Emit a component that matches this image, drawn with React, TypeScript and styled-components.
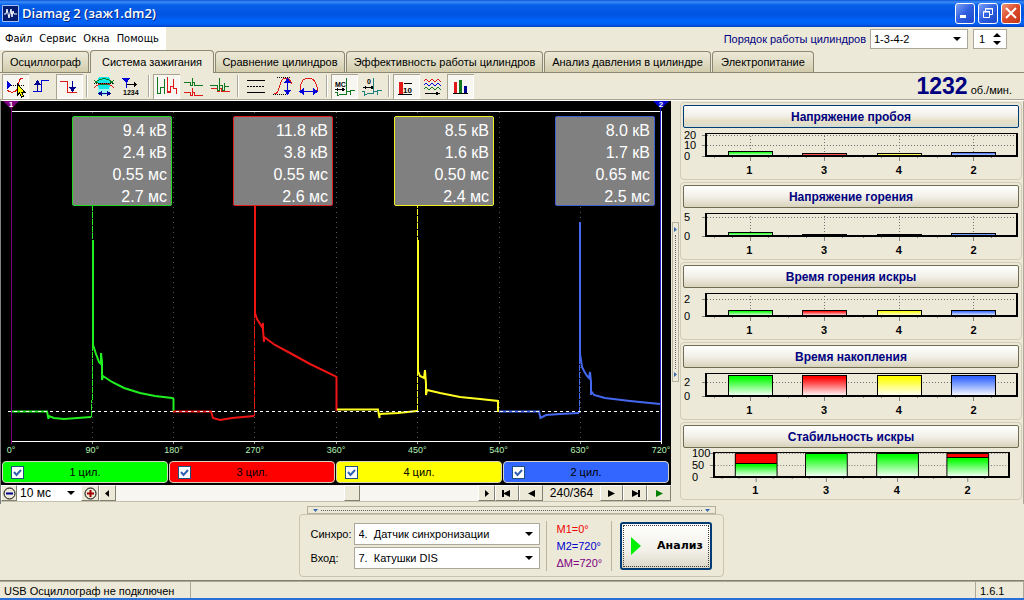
import React from "react";
import styled, { createGlobalStyle, css } from "styled-components";

const UI = '"Liberation Sans", Arial, sans-serif';
const TAHOMA = '"DejaVu Sans Condensed", Tahoma, sans-serif';

const GlobalStyle = createGlobalStyle`
  * { box-sizing: border-box; }
  body { margin: 0; background: #ece9d8; font: 11px/16px ${UI}; color: #000; }
  button, input, select { font: inherit; color: inherit; margin: 0; }
  button { padding: 0; }
`;

const Window = styled.div`
  display: flex;
  flex-direction: column;
  min-height: 100vh;
  border-bottom: 2px solid #2a6fd8;
`;

/* Title bar */
const TitleBar = styled.header`
  display: flex;
  align-items: center;
  gap: 3px;
  height: 27px;
  padding: 0 3px 1px 2px;
  background: linear-gradient(#0a55d8 0, #3c8cf8 2px, #0560ea 5px, #0054e0 14px, #0062fa 21px, #0060f4 24px, #0040c0 27px);
`;
const WindowTitle = styled.h1`
  flex: 1;
  margin: 0;
  font: 600 13px/20px "Open Sans", sans-serif;
  color: #fff;
  text-shadow: 1px 1px 0 #0a2a80;
`;
const CaptionButton = styled.button<{ $close?: boolean }>`
  display: grid;
  place-items: center;
  width: 20px;
  height: 21px;
  border: 1px solid #fff;
  border-radius: 3px;
  background: ${(p) => (p.$close ? "linear-gradient(135deg, #f0987c, #dc4a28 50%, #c03818)" : "linear-gradient(135deg, #7ca0f4, #2e5ee0 50%, #1c48c8)")};
`;

/* Menu row */
const MenuRow = styled.div`
  display: flex;
  justify-content: space-between;
  height: 23px;
`;
const Menu = styled.nav`
  display: flex;
  align-items: center;
  gap: 7px;
  padding: 0 7px 0 5px;
  background: #fff;
  font: 11px/14px ${TAHOMA};
`;
const MenuLink = styled.a`
  color: #000;
  text-decoration: none;
`;
const OrderBox = styled.div`
  display: flex;
  align-items: center;
  gap: 4px;
  padding-right: 17px;
`;
const OrderLabel = styled.label`
  color: #000080;
`;

const SelectBox = styled.span<{ $w: number; $h: number; $flat?: boolean }>`
  position: relative;
  display: block;
  width: ${(p) => p.$w}px;
  height: ${(p) => p.$h}px;
  border: ${(p) => (p.$flat ? "0" : "1px solid #aca899")};
  background: #fff;
  &::after {
    content: "";
    position: absolute;
    right: 6px;
    top: 50%;
    margin-top: -2px;
    border: 4px solid transparent;
    border-top-color: #000;
    border-bottom: 0;
    pointer-events: none;
  }
`;
const SelectInput = styled.select<{ $pad?: number }>`
  appearance: none;
  display: block;
  width: 100%;
  height: 100%;
  padding: 0 16px 0 ${(p) => p.$pad ?? 3}px;
  border: 0;
  outline: 0;
  background: transparent;
  white-space: pre;
`;
const Spinner = styled.div`
  display: flex;
  width: 34px;
  height: 20px;
  margin-left: 1px;
  border: 1px solid #aca899;
  background: #fff;
`;
const SpinnerInput = styled.input`
  flex: 1;
  min-width: 0;
  padding: 0 0 0 5px;
  border: 0;
  outline: 0;
  background: transparent;
  appearance: textfield;
  &::-webkit-inner-spin-button { display: none; }
`;
const SpinnerButtons = styled.div`
  display: grid;
  width: 18px;
`;
const BareButton = styled.button`
  display: grid;
  place-items: center;
  border: 0;
  background: none;
`;

/* Tabs */
const Tabs = styled.div`
  display: flex;
  align-items: flex-end;
  gap: 1px;
  height: 23px;
  padding-left: 2px;
  border-bottom: 1px solid #8c8874;
`;
const Tab = styled.button<{ $w: number; $active?: boolean }>`
  width: ${(p) => p.$w}px;
  height: ${(p) => (p.$active ? 23 : 21)}px;
  margin-bottom: ${(p) => (p.$active ? -1 : 0)}px;
  padding: 0;
  border: 1px solid #8c8874;
  border-bottom: 0;
  border-radius: 4px 4px 0 0;
  background: ${(p) => (p.$active ? "#ece9d8" : "linear-gradient(#ece9d8, #e0dcc4 50%, #d2ccac)")};
  white-space: nowrap;
`;

/* Toolbar */
const Toolbar = styled.div`
  display: flex;
  align-items: center;
  height: 27px;
  padding-left: 2px;
  padding-right: 12px;
  border-bottom: 1px solid #a8a490;
`;
const ToolButton = styled.button<{ $down?: boolean }>`
  width: 27px;
  height: 25px;
  border: 0;
  background: none;
  ${(p) =>
    p.$down &&
    css`
      background: #f8f6f0;
      box-shadow: inset 1px 1px 0 #a8a490, inset -1px -1px 0 #fff;
    `}
  svg { display: block; }
`;
const ToolSeparator = styled.span`
  width: 2px;
  height: 22px;
  margin: 0 3px;
  border-left: 1px solid #aca899;
  border-right: 1px solid #fff;
`;
const Rpm = styled.output`
  display: flex;
  align-items: baseline;
  gap: 3px;
  margin-left: auto;
`;
const RpmValue = styled.strong`
  font-size: 23px;
  line-height: 24px;
  color: #000080;
`;
const RpmUnit = styled.span`
  font-size: 11px;
`;

/* Work area */
const Work = styled.main`
  display: grid;
  grid-template-columns: minmax(0, 1fr) 9px 344px;
  flex: 1;
  border-left: 1px solid #808080;
  border-top: 1px solid #fff;
`;
const ScopePane = styled.section`
  display: flex;
  flex-direction: column;
  padding-bottom: 2px;
`;
const Scope = styled.div`
  display: flex;
  flex-direction: column;
  flex: 1;
  position: relative;
  background: #000;
`;
const PlotHolder = styled.div`
  display: flex;
  flex: 1;
  min-height: 300px;
`;
const Plot = styled.svg`
  display: block;
  flex: 1;
  width: 100%;
  min-height: 0;
`;
const AngleAxis = styled.div`
  display: flex;
  justify-content: space-between;
  height: 14px;
  padding: 0 10px;
  font-size: 9px;
  line-height: 10px;
  color: #b4f0b4;
`;
const AngleTick = styled.span`
  display: flex;
  justify-content: center;
  width: 0;
`;
const Readouts = styled.div`
  position: absolute;
  top: 15px;
  left: 71px;
  right: 16px;
  display: flex;
  justify-content: space-between;
`;
const Readout = styled.div<{ $color: string }>`
  width: 100px;
  height: 90px;
  padding: 3px 4px;
  border: 1px solid ${(p) => p.$color};
  border-radius: 2px;
  background: #808080;
  color: #fff;
  font-size: 16px;
  line-height: 22px;
  text-align: right;
`;
const Marker = styled.span<{ $right?: boolean }>`
  position: absolute;
  top: 0;
  ${(p) => (p.$right ? "right: 2px;" : "left: 2px;")}
  width: 16px;
  height: 8px;
  background: ${(p) => (p.$right ? "#0000d0" : "#800080")};
  clip-path: polygon(0 0, 100% 0, 50% 100%);
  color: #fff;
  font: bold 8px/8px ${UI};
  text-align: center;
`;
const Channels = styled.div`
  display: grid;
  grid-template-columns: repeat(4, 1fr);
  gap: 1px;
  padding: 2px 2px 2px 1px;
  background: #000;
`;
const Channel = styled.label<{ $color: string }>`
  display: grid;
  grid-template-columns: 13px 1fr 13px;
  align-items: center;
  height: 22px;
  padding: 0 8px;
  border: 1px solid #d8d4c0;
  border-radius: 4px;
  background: ${(p) => p.$color};
  text-align: center;
`;
const CheckBox = styled.input`
  appearance: none;
  width: 13px;
  height: 13px;
  border: 1px solid #1c5180;
  background: #fff;
  &:checked {
    background: #fff url("data:image/svg+xml,%3Csvg xmlns='http://www.w3.org/2000/svg' viewBox='0 0 11 11'%3E%3Cpath d='M2 5l2.5 3L9 3' fill='none' stroke='%233060b0' stroke-width='2'/%3E%3C/svg%3E");
  }
`;
const NavBar = styled.div`
  display: flex;
  align-items: stretch;
  height: 17px;
  border-bottom: 1px solid #c4c0ac;
  font-size: 12px;
`;
const NavButton = styled.button<{ $w: number }>`
  display: grid;
  place-items: center;
  width: ${(p) => p.$w}px;
  border: 1px solid;
  border-color: #fff #808070 #808070 #fff;
  background: #ece9d8;
`;
const ScrollRange = styled.input`
  appearance: none;
  flex: 1;
  min-width: 0;
  height: 16px;
  background: #f8f6f0;
  &::-webkit-slider-thumb {
    appearance: none;
    width: 16px;
    height: 16px;
    border: 1px solid;
    border-color: #fff #808070 #808070 #fff;
    background: #ece9d8;
  }
`;
const FrameCounter = styled.span`
  width: 57px;
  text-align: center;
`;
const SideSplitter = styled.button`
  display: flex;
  flex-direction: column;
  justify-content: space-between;
  align-items: center;
  align-self: center;
  justify-self: center;
  width: 7px;
  height: 160px;
  margin-bottom: 2px;
  padding: 4px 0;
  border: 1px solid #b4b09c;
  background: #ece9d8;
`;
const SplitterDots = styled.span<{ $vertical?: boolean }>`
  flex: 1;
  margin: 3px;
  ${(p) => (p.$vertical ? "border-left" : "border-top")}: 1px dotted #606060;
`;

/* Cylinder summary */
const Summary = styled.aside`
  display: flex;
  flex-direction: column;
  gap: 2px;
  padding: 1px 1px 3px 0;
  border-right: 1px solid #aca899;
`;
const SummaryGroup = styled.section`
  height: 78px;
  padding: 2px;
  border: 1px solid #d0ccb8;
  border-radius: 4px;
`;
const SummaryButton = styled.button<{ $focus?: boolean }>`
  display: block;
  width: 100%;
  height: 23px;
  border: 1px solid ${(p) => (p.$focus ? "#003c74" : "#706c50")};
  border-radius: 2px;
  background: ${(p) => (p.$focus ? "linear-gradient(#fff, #f0eee4 50%, #e8dfc4 70%, #d4dcd4)" : "linear-gradient(#fff, #f2f0e8 50%, #d8d3bc)")};
  color: #000080;
  font-size: 12px;
  font-weight: bold;
`;
const BarRow = styled.div<{ $inset?: boolean }>`
  display: grid;
  grid-template-columns: 22px minmax(0, 1fr);
  padding: ${(p) => (p.$inset ? "0 9px 0 8px" : "0 1px 0 0")};
`;
const BarSvg = styled.svg`
  display: block;
  width: 100%;
  height: 34px;
`;
const CylinderNames = styled.div`
  display: grid;
  grid-template-columns: repeat(4, 1fr);
  grid-column: 2;
  padding: 0 7px;
  font-weight: bold;
  text-align: center;
`;

/* Input panel */
const Lower = styled.footer`
  display: flex;
  flex-direction: column;
  align-items: center;
  padding: 2px 2px 3px 0;
  border-bottom: 1px solid #808070;
`;
const BottomSplitter = styled.button`
  display: flex;
  align-items: center;
  justify-content: space-between;
  width: 409px;
  height: 8px;
  padding: 0 5px;
  border: 1px solid #b4b09c;
  background: #ece9d8;
`;
const InputPanel = styled.div`
  display: flex;
  align-items: center;
  width: 425px;
  height: 63px;
  padding: 0 11px;
  border: 1px solid #c8c4b0;
  border-radius: 4px;
`;
const SourceForm = styled.div`
  display: grid;
  grid-template-columns: 43px 186px;
  align-items: center;
  row-gap: 2px;
  margin-right: 6px;
`;
const Cursors = styled.div`
  width: 67px;
  height: 50px;
  padding-left: 10px;
  border-left: 1px solid #b8b4a0;
  border-right: 1px solid #b8b4a0;
`;
const CursorText = styled.div<{ $color: string }>`
  line-height: 17px;
  color: ${(p) => p.$color};
`;
const AnalyzeButton = styled.button`
  display: flex;
  align-items: center;
  gap: 15px;
  width: 92px;
  height: 48px;
  margin-left: 8px;
  padding-left: 8px;
  border: 2px solid #003c74;
  border-radius: 3px;
  outline: 1px dotted #404040;
  outline-offset: -4px;
  background: linear-gradient(#fff, #f2f0e8 60%, #dcd8c8);
  font: bold 11px/14px "DejaVu Sans", sans-serif;
`;
const StatusBar = styled.div`
  display: flex;
  height: 17px;
  border-top: 1px solid #aca899;
  line-height: 18px;
  white-space: nowrap;
`;
const StatusCell = styled.span<{ $w?: number }>`
  ${(p) => (p.$w ? `width: ${p.$w}px;` : "flex: 1;")}
  padding-left: 4px;
  border-right: 1px solid #aca899;
`;

/* Toolbar drawings, on a 27 by 25 grid */
const Ic = ({ children }: { children: React.ReactNode }) => (
  <svg width="27" height="25" viewBox="0 0 27 25" fill="none" shapeRendering="crispEdges" aria-hidden="true">
    {children}
  </svg>
);
const G = "#107820";
const R = "#e01818";
const B = "#0000d8";
const pulse = (x: number, y: number) => `M${x} ${y}h7v3h2v-8v5h2v3h8`;

const icons: Record<string, React.ReactNode> = {
  trigger: (
    <Ic>
      <path d="M5 7l5 4-5 4z" fill={B} />
      <path d="M9 11.500h13" stroke="#000" strokeDasharray="1 1" />
      <path d="M21 4C16 4 17 11 15 15C13 19 8 19 5 16" stroke={R} />
      <path d="M15.500 10v11l2-2 2 4 2-1-2-4h3z" fill="#ff0" stroke="#000" />
    </Ic>
  ),
  rise: (
    <Ic>
      <path d="M4 17.500H12.500V6.500H20" stroke={B} />
      <path d="M8.500 17V8" stroke="#000090" />
      <path d="M8.500 6l3.500 5h-7z" fill="#000090" />
    </Ic>
  ),
  fall: (
    <Ic>
      <path d="M4 7.500H11.500V18.500H21" stroke={R} />
      <path d="M16.500 7v7" stroke="#000090" />
      <path d="M16.500 18l-3.500-5h7z" fill="#000090" />
    </Ic>
  ),
  window: (
    <Ic>
      <path d="M7 7h12v14H7z" fill="#a0f4f4" />
      <path d="M8 3h10l2 4-2 8h-10l-2-8z" fill="#10e8e8" />
      <path d="M3 6c5 6 15 6 20 0M3 10c6-7 14-7 20 0" stroke={G} />
      <path d="M3 14c5-6 15-6 20 0" stroke={R} />
      <path d="M3 9.500h20" stroke="#000" strokeDasharray="1 1" />
      <path d="M9 19.500h9" stroke="#000090" />
      <path d="M7 19.500l4-3v6zM20 19.500l-4-3v6z" fill="#000090" />
    </Ic>
  ),
  count: (
    <Ic>
      <path d="M4 4h8L8.500 8z" fill={B} stroke={B} />
      <path d="M8.500 8v6" stroke={B} />
      <path d="M9 10.500h9" stroke="#000" />
      <path d="M19 10.500l-3-3v6z" fill="#000" />
      <text x="5" y="21" fontSize="7" fontWeight="bold" fontFamily={UI} fill="#000">1234</text>
    </Ic>
  ),
  parade: (
    <Ic>
      <path d="M4.500 3v16.500h3v-6h4v-9v15" stroke={G} />
      <path d="M14.500 12.500v5h2.500M14.500 3v15.500h3v-6h3v-8v10h3v5" stroke={R} />
    </Ic>
  ),
  split: (
    <Ic>
      <path d={pulse(3.5, 8.5)} stroke={G} />
      <path d={pulse(3.5, 18.5)} stroke={R} />
    </Ic>
  ),
  overlay: (
    <Ic>
      <path d={pulse(3.5, 14.5)} stroke={R} />
      <path d="M3 11.500h7v5h2v-13v8h3v5h2v-8v4h5" stroke={G} />
    </Ic>
  ),
  levels: (
    <Ic>
      <path d="M5 6.500h18M5 18.500h18" stroke="#000" />
      <path d="M5 12.500h18" stroke="#000" strokeDasharray="2 1" />
    </Ic>
  ),
  vertical: (
    <Ic>
      <path d="M4 20C13 21 8 4 17 4C20 4 21 6 23 10" stroke={R} />
      <path d="M8 3.500h14M4 20.500h14" stroke="#000" strokeDasharray="1 1" />
      <path d="M18.500 7v11" stroke={B} />
      <path d="M18.500 4l3.500 5h-7zM18.500 21l3.500-5h-7z" fill={B} />
    </Ic>
  ),
  horizontal: (
    <Ic>
      <path d="M4 18V13C5 8 8 4 12 4C17 4 20 8 21 13V18" stroke={R} />
      <path d="M7 17.500h12" stroke={B} />
      <path d="M3 17.500l5-3.500v7zM22 17.500l-5-3.500v7z" fill={B} />
    </Ic>
  ),
  time: (
    <Ic>
      <text x="4" y="13" fontSize="7" fontWeight="bold" fontFamily={UI} fill="#000">МС</text>
      <path d="M6 15.500h7" stroke="#000" />
      <path d="M4 15.500l3-2v4zM14 15.500l-3-2v4z" fill="#000" />
      <path d="M4 18.500h2v3l4-1h5.500V4v13h4v4v-5h4" stroke={G} />
    </Ic>
  ),
  angle: (
    <Ic>
      <text x="9" y="10" fontSize="7" fontWeight="bold" fontFamily={UI} fill="#000">0</text>
      <path d="M7 13.500h8" stroke="#000" />
      <path d="M5 13.500l3-2v4zM16 13.500l-3-2v4z" fill="#000" />
      <path d="M4 17.500h2v4l4-2h5.500V4v13h4v4v-5h4" stroke="#208080" />
    </Ic>
  ),
  average: (
    <Ic>
      <path d="M6 8h4v12H6z" fill={R} />
      <path d="M5 20.500h14M11 9.500h8" stroke="#000" />
      <text x="10" y="19" fontSize="8" fontWeight="bold" fontFamily={UI} fill="#000">10</text>
    </Ic>
  ),
  waves: (
    <Ic>
      <path d="M4 7l2-2 3 3 3-3 3 3 3-3 3 3" stroke={R} />
      <path d="M4 11l2-2 3 3 3-3 3 3 3-3 3 3" stroke={B} />
      <path d="M4 15l2-2 3 3 3-3 3 3 3-3 3 3" stroke={G} />
      <path d="M5 19.500h14" stroke="#000" />
      <path d="M20 19.500l-4-2v4z" fill="#000" />
    </Ic>
  ),
  bars: (
    <Ic>
      <path d="M7 8h3v11H7z" fill={R} />
      <path d="M12 6h3v13h-3z" fill={G} />
      <path d="M17 12h3v7h-3z" fill="#000090" />
      <path d="M6 19.500h15" stroke="#000" />
    </Ic>
  ),
};

const toolGroups: [string, string, boolean][][] = [
  [["trigger", "Синхронизация", true], ["rise", "Фронт", false], ["fall", "Спад", true]],
  [["window", "Окно", false], ["count", "Нумерация", false]],
  [["parade", "Парад", true], ["split", "Раздельно", false], ["overlay", "Наложение", false]],
  [["levels", "Уровни", false], ["vertical", "По вертикали", false], ["horizontal", "По горизонтали", false]],
  [["time", "Время", true], ["angle", "Угол", false]],
  [["average", "Усреднение", true], ["waves", "Кривые", false], ["bars", "Диаграммы", true]],
];

const tabs: [string, number][] = [
  ["Осциллограф", 87],
  ["Система зажигания", 124],
  ["Сравнение цилиндров", 130],
  ["Эффективность работы цилиндров", 197],
  ["Анализ давления в цилиндре", 167],
  ["Электропитание", 102],
];

const cylinders = [
  { name: "1", color: "#00ff00", edge: "#20d820", values: ["9.4 кВ", "2.4 кВ", "0.55 мс", "2.7 мс"] },
  { name: "3", color: "#ff0000", edge: "#e02020", values: ["11.8 кВ", "3.8 кВ", "0.55 мс", "2.6 мс"] },
  { name: "4", color: "#ffff00", edge: "#f0f020", values: ["8.5 кВ", "1.6 кВ", "0.50 мс", "2.4 мс"] },
  { name: "2", color: "#3366ff", edge: "#4060d0", values: ["8.0 кВ", "1.7 кВ", "0.65 мс", "2.5 мс"] },
];

const traces = [
  {
    color: "#20f020",
    spike: "M91.500 417V400M92.500 400V206",
    burn: "M93 240V347",
    line: "M12 411.500H47L48.500 419V416L54 418L64 419L91 417M93 345L96 354L99 362L101 364V353L102 362V380L103 376L112 382L124 388L140 393L155 396L172 398L173.500 399V412",
  },
  {
    color: "#f01414",
    spike: "M254.500 416V206",
    burn: "M255 206V315",
    line: "M173 411.500H211L213 418L220 420L232 418L254 416M255 313L257 319L262 327L263 323V330L264 342V337L275 345L290 353L310 364L335 376L336.500 377V411",
  },
  {
    color: "#ffff20",
    spike: "M417.500 411V206",
    burn: "M418 240V373",
    line: "M337 409.500H378L379.500 418V414L398 413L417 411M418 371L420 376L424 378L425 370L426 384V395L427 390L440 393L460 397L480 399L498 401V412",
  },
  {
    color: "#4468f0",
    spike: "M579.500 413V222",
    burn: "M580 222V358",
    line: "M499 411.500H539L540.500 418L546 415L560 414L579 413M580 354L582 367L584 371L587 376L589 378L590 372L591 382V395V391L594 395L605 398L630 401L660 404",
  },
];

const gridX = [92.5, 173.5, 254.5, 336.5, 417.5, 499.5, 580.5];

interface Chart {
  title: string;
  ticks: [string, number][];
  tops: number[];
  red?: boolean;
}
const charts: Chart[] = [
  { title: "Напряжение пробоя", ticks: [["20", 7], ["10", 17], ["0", 28]], tops: [23, 25, 25, 24] },
  { title: "Напряжение горения", ticks: [["5", 9], ["0", 28]], tops: [24, 26, 26, 25] },
  { title: "Время горения искры", ticks: [["2", 11], ["0", 28]], tops: [22, 22, 22, 22] },
  { title: "Время накопления", ticks: [["2", 14], ["0", 28]], tops: [7, 7, 7, 7] },
  { title: "Стабильность искры", ticks: [["100", 5], ["50", 17], ["0", 29]], tops: [15, 5, 5, 9], red: true },
];

function BarPanel({ chart, index }: { chart: Chart; index: number }) {
  const stacked = !!chart.red;
  const top = stacked ? 4 : 5;
  const floor = stacked ? 29 : 28;
  return (
    <SummaryGroup>
      <SummaryButton $focus={index === 0}>{chart.title}</SummaryButton>
      <BarRow $inset={stacked}>
        <svg width="22" height="34" viewBox="0 0 22 34">
          {chart.ticks.map(([t, y]) => (
            <React.Fragment key={t}>
              <text x="1" y={y + 4} fontSize="11" fontFamily={UI}>{t}</text>
              <path d={`M19 ${y}.500h3`} stroke="#808080" />
            </React.Fragment>
          ))}
        </svg>
        <BarSvg viewBox="0 0 313 34" preserveAspectRatio="none" shapeRendering="crispEdges">
          <defs>
            {cylinders.map((c, i) => (
              <linearGradient key={c.name} id={`g${index}-${i}`} x2="0" y2="1">
                <stop offset="0.1" stopColor={stacked ? "#00ff00" : c.color} />
                <stop offset="1" stopColor="#fff" />
              </linearGradient>
            ))}
          </defs>
          {chart.ticks.slice(0, -1).map(([t, y]) => (
            <path key={t} d={`M2 ${y}.500H311`} stroke="#707070" strokeDasharray="1 2" />
          ))}
          {cylinders.map((c, i) => {
            const cx = 45 + Math.round(i * 74.4);
            return (
              <g key={c.name}>
                <path d={`M${cx}.500 ${top}V${floor}`} stroke="#707070" strokeDasharray="1 2" />
                <path d={`M${cx}.500 ${floor}v5M${cx - 36}.500 ${floor}v2M${cx - 18}.500 ${floor}v2M${cx + 18}.500 ${floor}v2`} stroke="#808080" />
                {stacked && <path d={`M${cx - 22}.500 5.500h44v${chart.tops[i] - 5}h-44z`} fill="#f00" stroke={chart.tops[i] > 5 ? "#000" : "#a06000"} />}
                <path d={`M${cx - 22}.500 ${chart.tops[i]}.500h44V${floor}h-44z`} fill={`url(#g${index}-${i})`} stroke="#000" />
              </g>
            );
          })}
          <path d={`M1 ${floor}V${top}.500M312 ${floor}V${top}M0 ${floor}H313`} stroke="#000" strokeWidth="2" />
          <path d={`M0 ${top}.500H313`} stroke="#000" />
        </BarSvg>
        <CylinderNames>
          {cylinders.map((c) => <span key={c.name}>{c.name}</span>)}
        </CylinderNames>
      </BarRow>
    </SummaryGroup>
  );
}

const Glyph = ({ d, color = "#000" }: { d: string; color?: string }) => (
  <svg width="13" height="9" viewBox="0 0 13 9" fill={color} aria-hidden="true"><path d={d} /></svg>
);

const ZoomGlyph = ({ plus }: { plus?: boolean }) => (
  <svg width="13" height="13" viewBox="0 0 13 13" fill="none" aria-hidden="true">
    <circle cx="6.500" cy="6.500" r="5.500" stroke="#000" />
    <path d={plus ? "M3 6.500h7M6.500 3v7" : "M3 6.500h7"} stroke={plus ? "#a00000" : "#000090"} strokeWidth="2" />
  </svg>
);

const Arrow = ({ d }: { d: string }) => (
  <svg width="5" height="5" viewBox="0 0 5 5" fill="#3868a8" aria-hidden="true"><path d={d} /></svg>
);

export default function App() {
  return (
    <Window>
      <GlobalStyle />
      <TitleBar>
        <svg width="17" height="17" viewBox="0 0 17 17" fill="none" aria-hidden="true">
          <path d="M.5.5h16v16H.5z" fill="#001c70" stroke="#a8c0f0" />
          <path d="M2 9h2l1-5 2 9 2-9 1 8 1-6 1 3h3" stroke="#fff" />
        </svg>
        <WindowTitle>Diamag 2 (заж1.dm2)</WindowTitle>
        <CaptionButton aria-label="Свернуть">
          <svg width="14" height="14" viewBox="0 0 14 14"><path d="M2 9h6v3H2z" fill="#fff" /></svg>
        </CaptionButton>
        <CaptionButton aria-label="Восстановить">
          <svg width="14" height="14" viewBox="0 0 14 14" fill="none" stroke="#fff"><path d="M4.500 5V2.500h7v6H9M4 3h8M2.500 5.500h6v6h-6zM2 6h7" /></svg>
        </CaptionButton>
        <CaptionButton $close aria-label="Закрыть">
          <svg width="14" height="14" viewBox="0 0 14 14"><path d="M2 2l10 10M12 2L2 12" stroke="#fff" strokeWidth="2" /></svg>
        </CaptionButton>
      </TitleBar>

      <MenuRow>
        <Menu>
          {["Файл", "Сервис", "Окна", "Помощь"].map((m) => <MenuLink key={m} href="#">{m}</MenuLink>)}
        </Menu>
        <OrderBox>
          <OrderLabel htmlFor="order">Порядок работы цилиндров</OrderLabel>
          <SelectBox $w={98} $h={20}>
            <SelectInput id="order"><option>1-3-4-2</option></SelectInput>
          </SelectBox>
          <Spinner>
            <SpinnerInput type="number" defaultValue={1} aria-label="Номер" />
            <SpinnerButtons>
              <BareButton aria-label="Больше"><Glyph d="M2 7l4-4 4 4z" /></BareButton>
              <BareButton aria-label="Меньше"><Glyph d="M2 2l4 4 4-4z" /></BareButton>
            </SpinnerButtons>
          </Spinner>
        </OrderBox>
      </MenuRow>

      <Tabs role="tablist">
        {tabs.map(([t, w], i) => (
          <Tab key={t} role="tab" aria-selected={i === 1} $w={w} $active={i === 1}>{t}</Tab>
        ))}
      </Tabs>

      <Toolbar>
        {toolGroups.map((group, i) => (
          <React.Fragment key={i}>
            {i > 0 && <ToolSeparator />}
            {group.map(([id, label, down]) => (
              <ToolButton key={id} $down={down} aria-label={label}>{icons[id]}</ToolButton>
            ))}
          </React.Fragment>
        ))}
        <Rpm>
          <RpmValue>1232</RpmValue>
          <RpmUnit>об./мин.</RpmUnit>
        </Rpm>
      </Toolbar>

      <Work>
        <ScopePane>
          <Scope>
            <PlotHolder>
              <Plot viewBox="1 101 670 344" preserveAspectRatio="none" fill="none">
                <g shapeRendering="crispEdges">
                  {gridX.map((x) => (
                    <path key={x} d={`M${x} 112V441`} stroke="#505c50" strokeDasharray="1 4" />
                  ))}
                  {gridX.map((x) => <path key={x} d={`M${x} 441v3`} stroke="#a0a0a0" />)}
                  <path d="M12 111.500H661M11 441.500H662" stroke="#fff" />
                  <path d="M11.500 108V444" stroke="#800080" />
                  <path d="M660.500 108V441" stroke="#2020d0" />
                  <path d="M661.500 111V444" stroke="#fff" />
                </g>
                {traces.map((t) => (
                  <g key={t.color} stroke={t.color}>
                    <path d={t.spike} strokeDasharray="6 1" />
                    <path d={t.burn} strokeWidth="2" />
                    <path d={t.line} strokeWidth="2" />
                  </g>
                ))}
                <path d="M8 411.500H661" stroke="#fff" strokeDasharray="3 3" shapeRendering="crispEdges" />
              </Plot>
            </PlotHolder>
            <AngleAxis>
              {[0, 90, 180, 270, 360, 450, 540, 630, 720].map((a) => <AngleTick key={a}>{a}°</AngleTick>)}
            </AngleAxis>
            <Marker>1</Marker>
            <Marker $right>2</Marker>
            <Readouts>
              {cylinders.map((c) => (
                <Readout key={c.name} $color={c.edge}>
                  {c.values.map((v, i) => <div key={i}>{v}</div>)}
                </Readout>
              ))}
            </Readouts>
          </Scope>
          <Channels>
            {cylinders.map((c) => (
              <Channel key={c.name} $color={c.color}>
                <CheckBox type="checkbox" defaultChecked />
                {c.name} цил.
              </Channel>
            ))}
          </Channels>
          <NavBar>
            <NavButton $w={16} aria-label="Уменьшить"><ZoomGlyph /></NavButton>
            <SelectBox $w={64} $h={16} $flat>
              <SelectInput aria-label="Развёртка"><option>10 мс</option></SelectInput>
            </SelectBox>
            <NavButton $w={18} aria-label="Увеличить"><ZoomGlyph plus /></NavButton>
            <NavButton $w={17} aria-label="Влево"><Glyph d="M8 1v7L4 4.500z" /></NavButton>
            <ScrollRange type="range" min={0} max={1000} defaultValue={658} aria-label="Прокрутка" />
            <NavButton $w={17} aria-label="Вправо"><Glyph d="M5 1v7l4-3.500z" /></NavButton>
            <NavButton $w={24} aria-label="В начало"><Glyph d="M1 1h2v3l6-3v7l-6-3v3H1z" /></NavButton>
            <NavButton $w={24} aria-label="Назад"><Glyph d="M10 1v7L3 4.500z" /></NavButton>
            <FrameCounter>240/364</FrameCounter>
            <NavButton $w={23} aria-label="Вперёд"><Glyph d="M3 1v7l7-3.500z" /></NavButton>
            <NavButton $w={24} aria-label="В конец"><Glyph d="M11 1H9v3L3 1v7l6-3v3h2z" /></NavButton>
            <NavButton $w={24} aria-label="Пуск"><Glyph d="M3 1v7l7-3.500z" color="#008000" /></NavButton>
          </NavBar>
        </ScopePane>

        <SideSplitter aria-label="Скрыть панель">
          <Arrow d="M1 0v5l3-2.500z" />
          <SplitterDots $vertical />
          <Arrow d="M1 0v5l3-2.500z" />
        </SideSplitter>

        <Summary>
          {charts.map((c, i) => <BarPanel key={c.title} chart={c} index={i} />)}
        </Summary>
      </Work>

      <Lower>
        <BottomSplitter aria-label="Скрыть настройки">
          <Arrow d="M0 1h5L2.500 4z" />
          <SplitterDots />
          <Arrow d="M0 1h5L2.500 4z" />
        </BottomSplitter>
        <InputPanel>
          <SourceForm>
            <label htmlFor="sync">Синхро:</label>
            <SelectBox $w={186} $h={22}>
              <SelectInput id="sync" $pad={4}><option>{"4.\u00a0 Датчик синхронизации"}</option></SelectInput>
            </SelectBox>
            <label htmlFor="source">Вход:</label>
            <SelectBox $w={186} $h={22}>
              <SelectInput id="source" $pad={4}><option>{"7.\u00a0 Катушки DIS"}</option></SelectInput>
            </SelectBox>
          </SourceForm>
          <Cursors>
            <CursorText $color="#f00000">M1=0°</CursorText>
            <CursorText $color="#0000d0">M2=720°</CursorText>
            <CursorText $color="#800080">ΔM=720°</CursorText>
          </Cursors>
          <AnalyzeButton>
            <svg width="12" height="20" viewBox="0 0 12 20" aria-hidden="true"><path d="M1 1v18l10-9z" fill="#00f000" /></svg>
            Анализ
          </AnalyzeButton>
        </InputPanel>
      </Lower>
      <StatusBar>
        <StatusCell $w={191}>USB Осциллограф не подключен</StatusCell>
        <StatusCell />
        <StatusCell $w={48}>1.6.1</StatusCell>
      </StatusBar>
    </Window>
  );
}
